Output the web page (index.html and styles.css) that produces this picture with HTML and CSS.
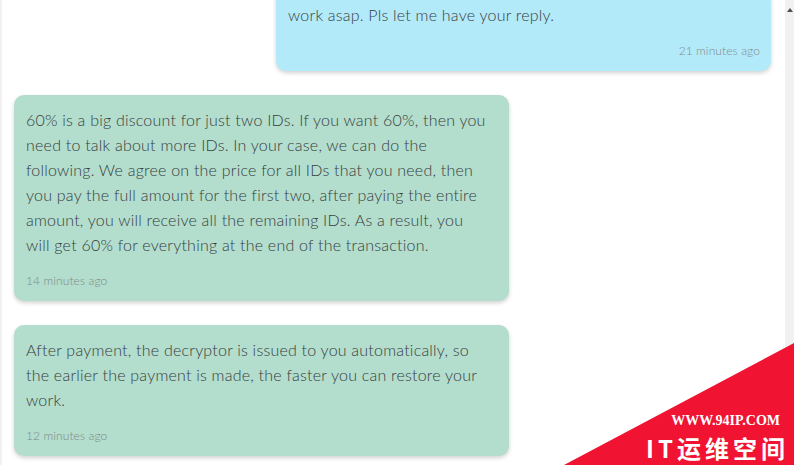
FILE: index.html
```html
<!DOCTYPE html>
<html lang="en">
<head>
  <meta charset="UTF-8">
  <title>Chat</title>
  <link rel="stylesheet" href="styles.css">
</head>
<body>
  <div class="page">
    <div class="chat">
      <div class="message message-out">
        <p class="text">work asap. Pls let me have your reply.</p>
        <div class="time">21 minutes ago</div>
      </div>

      <div class="message message-in">
        <p class="text">60% is a big discount for just two IDs. If you want 60%, then you need to talk about more IDs. In your case, we can do the following. We agree on the price for all IDs that you need, then you pay the full amount for the first two, after paying the entire amount, you will receive all the remaining IDs. As a result, you will get 60% for everything at the end of the transaction.</p>
        <div class="time">14 minutes ago</div>
      </div>

      <div class="message message-in">
        <p class="text">After payment, the decryptor is issued to you automatically, so the earlier the payment is made, the faster you can restore your work.</p>
        <div class="time">12 minutes ago</div>
      </div>
    </div>

    <div class="scrollbar">
      <span class="arrow"></span>
    </div>
  </div>

  <div class="watermark">
    <svg class="corner" width="230" height="122" viewBox="0 0 230 122">
      <polygon points="0,122 230,0 230,122" fill="#f01432"/>
    </svg>
    <div class="mark-text">
      <div class="site">WWW.94IP.COM</div>
      <div class="brand">IT运维空间</div>
    </div>
  </div>
</body>
</html>
```

FILE: styles.css
```css
body {
  margin: 0;
  padding: 0;
  font-family: 'Lato', 'Noto Sans', sans-serif;
  background-color: #ffffff;
  overflow: hidden;
}

.page {
  display: flex;
  height: 465px;
  border-left: 2px solid #f2f2f2;
}

.chat {
  flex: 1;
  display: flex;
  flex-direction: column;
  gap: 24px;
  padding: 0 14px 0 12px;
  margin-top: -11px;
}

.message {
  width: 495px;
  box-sizing: border-box;
  padding: 12px 20px 11px 12px;
  border-radius: 10px;
  box-shadow: 0 2px 4px rgba(0, 0, 0, 0.18);
  color: #38403e;
}

.message-out {
  align-self: flex-end;
  background-color: #b3eafa;
  padding-right: 11px;
  padding-top: 13px;
}

.message-in {
  align-self: flex-start;
  background-color: #b3ddcd;
}

.text {
  margin: 0;
  font-size: 16px;
  font-weight: 300;
  line-height: 25px;
  letter-spacing: 0.22px;
}

.time {
  margin-top: 15px;
  font-size: 12px;
  font-weight: 300;
  line-height: 18px;
  letter-spacing: 0.1px;
  color: #7f8a87;
}

.message-out .time {
  text-align: right;
}

.scrollbar {
  width: 9px;
  background-color: #f1f1f1;
  display: flex;
  justify-content: center;
  padding-top: 8px;
}

.arrow {
  width: 0;
  height: 0;
  border-left: 3px solid transparent;
  border-right: 3px solid transparent;
  border-bottom: 4px solid #505050;
}

.watermark {
  position: absolute;
  right: 0;
  bottom: 0;
  width: 230px;
  height: 122px;
}

.corner {
  display: block;
}

.mark-text {
  position: absolute;
  right: 9px;
  bottom: 5px;
  display: flex;
  flex-direction: column;
  align-items: flex-end;
  gap: 8px;
  color: #ffffff;
}

.site {
  font-family: 'Liberation Serif', serif;
  font-weight: bold;
  font-size: 14px;
  line-height: 14px;
  margin-right: 5px;
}

.brand {
  font-family: 'Noto Sans CJK SC', sans-serif;
  font-weight: bold;
  font-size: 24px;
  line-height: 24px;
  letter-spacing: 4px;
  margin-right: -4px;
}
```
